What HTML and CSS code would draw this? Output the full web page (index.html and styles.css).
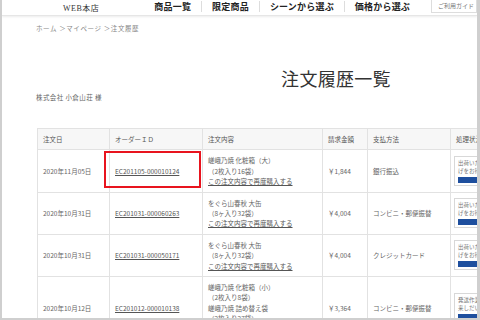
FILE: index.html
```html
<!DOCTYPE html>
<html lang="ja">
<head>
    <meta charset="UTF-8">
    <title>注文履歴一覧</title>
    <link rel="stylesheet" href="styles.css">
</head>
<body>
<div class="frame">
    <div class="header">
        <div class="logo">WEB本店</div>
        <div class="nav">
            <span class="nav-item">商品一覧</span>
            <span class="nav-item">限定商品</span>
            <span class="nav-item">シーンから選ぶ</span>
            <span class="nav-item">価格から選ぶ</span>
        </div>
        <div class="guide">ご利用ガイド</div>
    </div>

    <div class="content">
        <div class="crumbs">ホーム ＞マイページ ＞注文履歴</div>
        <h1 class="title">注文履歴一覧</h1>
        <div class="customer">株式会社 小倉山荘 様</div>

        <table class="orders">
            <colgroup>
                <col class="c-date">
                <col class="c-id">
                <col class="c-items">
                <col class="c-price">
                <col class="c-pay">
                <col class="c-status">
            </colgroup>
            <tr>
                <th>注文日</th>
                <th>オーダーＩＤ</th>
                <th>注文内容</th>
                <th>請求金額</th>
                <th>支払方法</th>
                <th>処理状況</th>
            </tr>
            <tr>
                <td>2020年11月05日</td>
                <td class="id-cell"><a>EC201105-000010124</a><span class="mark"></span></td>
                <td>嵯峨乃焼 化粧箱（大）<br>（2枚入り16袋）<br><a>この注文内容で再度購入する</a></td>
                <td>￥1,844</td>
                <td>銀行振込</td>
                <td><div class="status">出荷いたしました。お買い上<br>げをお待ちしております。<div class="status-btn"></div></div></td>
            </tr>
            <tr>
                <td>2020年10月31日</td>
                <td><a>EC201031-000060263</a></td>
                <td>をぐら山春秋 大缶<br>（8ヶ入り32袋）<br><a>この注文内容で再度購入する</a></td>
                <td>￥4,004</td>
                <td>コンビニ・郵便振替</td>
                <td><div class="status">出荷いたしました。お買い上<br>げをお待ちしております。<div class="status-btn"></div></div></td>
            </tr>
            <tr>
                <td>2020年10月31日</td>
                <td><a>EC201031-000050171</a></td>
                <td>をぐら山春秋 大缶<br>（8ヶ入り32袋）<br><a>この注文内容で再度購入する</a></td>
                <td>￥4,004</td>
                <td>クレジットカード</td>
                <td><div class="status">出荷いたしました。お買い上<br>げをお待ちしております。<div class="status-btn"></div></div></td>
            </tr>
            <tr>
                <td>2020年10月12日</td>
                <td><a>EC201012-000010138</a></td>
                <td>嵯峨乃焼 化粧箱（小）<br>（2枚入り8袋）<br>嵯峨乃焼 詰め替え袋<br>（2枚入り27袋）<br><a>この注文内容で再度購入する</a></td>
                <td>￥3,364</td>
                <td>コンビニ・郵便振替</td>
                <td><div class="status">発送作業中です。商品が出<br>来しだい発送いたします。<div class="status-btn"></div></div></td>
            </tr>
        </table>
    </div>
</div>
</body>
</html>
```

FILE: styles.css
```css
body {
    margin: 0;
    background: #fff;
    font-family: "Noto Sans CJK JP", "Noto Sans", sans-serif;
    color: #555;
}

.frame {
    width: 480px;
    height: 320px;
    box-sizing: border-box;
    border-left: 2px solid #cfcfcf;
    border-right: 3px solid #cfcfcf;
    border-bottom: 2px solid #cfcfcf;
    overflow: hidden;
}

/* шапка */
.header {
    display: flex;
    align-items: center;
    height: 15px;
    border-bottom: 1px solid #e6e6e6;
    box-shadow: 0 1px 2px rgba(0, 0, 0, 0.08);
    white-space: nowrap;
}
.logo {
    margin-left: 61px;
    font-family: "Liberation Serif", "Noto Sans CJK JP", serif;
    font-size: 8px;
    color: #333;
    letter-spacing: 0.5px;
}
.nav {
    display: flex;
    margin-left: 45px;
    margin-top: -3px;
}
.nav-item {
    padding: 0 10px;
    font-size: 9px;
    font-weight: bold;
    letter-spacing: 0.2px;
    color: #222;
    line-height: 11px;
    border-left: 1px solid #ddd;
}
.nav-item:first-child {
    border-left: none;
}
.guide {
    margin-left: auto;
    margin-top: -3px;
    width: 46px;
    height: 13px;
    box-sizing: border-box;
    border: 1px solid #ddd;
    border-top: none;
    font-size: 6px;
    line-height: 12px;
    padding-left: 6px;
    color: #777;
}

/* содержимое */
.content {
    width: 600px;
    padding-left: 34px;
}
.crumbs {
    margin-top: 7px;
    font-size: 6.5px;
    line-height: 10px;
    letter-spacing: 0.6px;
    color: #888;
}
.title {
    margin: 33px 0 0;
    text-align: center;
    font-size: 18px;
    line-height: 24px;
    font-weight: normal;
    color: #333;
    letter-spacing: 0.3px;
}
.customer {
    margin-top: 2px;
    font-size: 6.5px;
    line-height: 10px;
    letter-spacing: 0.4px;
    color: #666;
}

/* таблица заказов */
.orders {
    margin-top: 26px;
    margin-left: 1px;
    border-collapse: collapse;
    table-layout: fixed;
    width: 600px;
    font-size: 6.5px;
    color: #666;
}
.c-date { width: 72px; }
.c-id { width: 93px; }
.c-items { width: 120px; }
.c-price { width: 45px; }
.c-pay { width: 83px; }
.c-status { width: 187px; }

.orders th,
.orders td {
    border: 1px solid #e2e2e2;
    text-align: left;
    vertical-align: middle;
    padding: 5px 5px;
    line-height: 10.4px;
    white-space: nowrap;
}
.orders th {
    background: #f7f7f7;
    font-weight: normal;
    height: 10px;
    color: #555;
}
.orders a {
    color: #555;
    text-decoration: underline;
}
.id-cell {
    position: relative;
}
.mark {
    position: absolute;
    left: -6px;
    top: 1px;
    width: 97px;
    height: 37px;
    box-sizing: border-box;
    border: 2px solid #e8141e;
}

.status {
    width: 140px;
    border: 1px solid #d8d8d8;
    padding: 3px 3px 2px;
    font-size: 5.5px;
    line-height: 7.5px;
    color: #777;
    margin-left: -2px;
}
.status-btn {
    margin-top: 2px;
    height: 6px;
    background: #1e4f9e;
}
```
